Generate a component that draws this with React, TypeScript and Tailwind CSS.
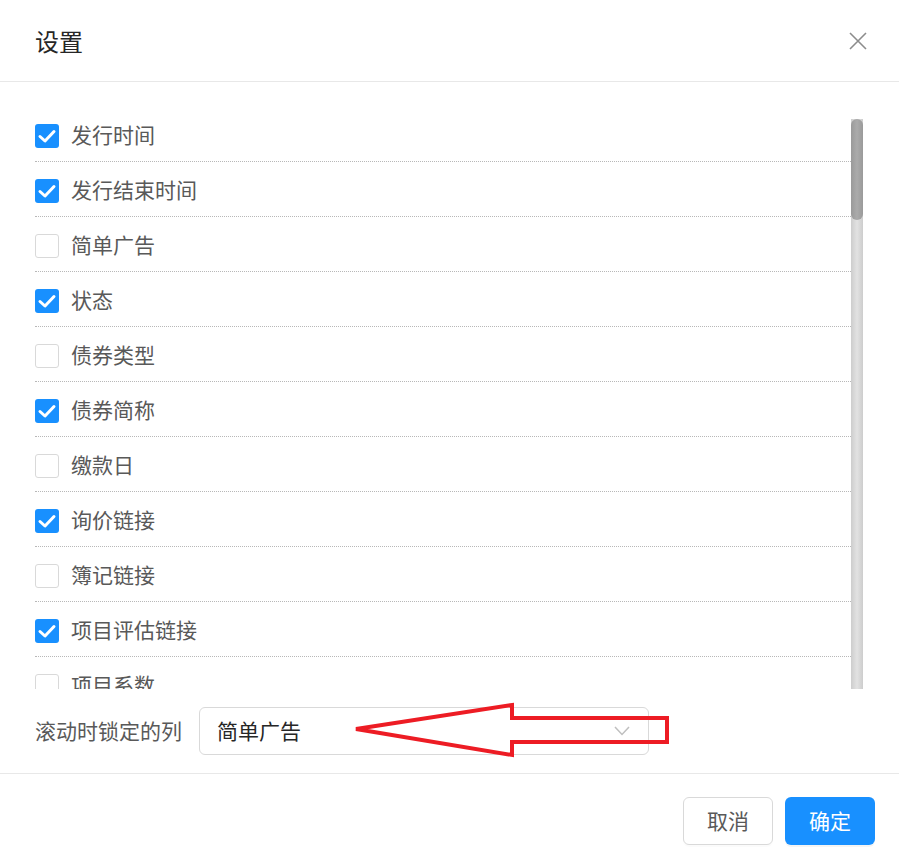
import React from "react";

const items: { label: string; checked: boolean }[] = [
  { label: "发行时间", checked: true },
  { label: "发行结束时间", checked: true },
  { label: "简单广告", checked: false },
  { label: "状态", checked: true },
  { label: "债券类型", checked: false },
  { label: "债券简称", checked: true },
  { label: "缴款日", checked: false },
  { label: "询价链接", checked: true },
  { label: "簿记链接", checked: false },
  { label: "项目评估链接", checked: true },
  { label: "项目系数", checked: false },
];

function Checkbox({ checked }: { checked: boolean }) {
  if (checked) {
    return (
      <span className="flex h-[24px] w-[24px] shrink-0 items-center justify-center rounded-[3px] bg-[#1890ff]">
        <svg width="24" height="24" viewBox="0 0 24 24" fill="none">
          <path d="M5 12.5 L10 17 L19 7.5" stroke="#ffffff" strokeWidth="3" strokeLinecap="round" strokeLinejoin="round" />
        </svg>
      </span>
    );
  }
  return <span className="block h-[24px] w-[24px] shrink-0 rounded-[3px] border border-[#d9d9d9] bg-white" />;
}

export default function App() {
  const font = { fontFamily: '"Microsoft YaHei", "Noto Sans CJK SC", "Noto Sans", sans-serif' };
  return (
    <div className="relative h-[865px] w-[899px] overflow-hidden bg-white" style={font}>
      {/* Header */}
      <div className="flex h-[82px] items-center justify-between border-b border-[#e8e8e8] pl-[35px] pr-[32px]">
        <div className="text-[24px] leading-[32px] text-[#262626]">设置</div>
        <svg width="18" height="18" viewBox="0 0 18 18" fill="none">
          <path d="M1 1 L17 17 M17 1 L1 17" stroke="#8c8c8c" strokeWidth="1.6" />
        </svg>
      </div>

      {/* Body */}
      <div className="pl-[35px] pr-[36px] pt-[25px]">
        <div className="flex h-[582px]">
          <div className="h-[582px] flex-1 overflow-hidden">
            {items.map((it) => (
              <div
                key={it.label}
                className="flex h-[55px] items-start border-b border-dotted border-[#b8b8b8] pt-[17px]"
              >
                <Checkbox checked={it.checked} />
                <span className="ml-[12px] -mt-[2px] text-[21px] leading-[24px] text-[#595959]">{it.label}</span>
              </div>
            ))}
          </div>
          <div className="mt-[12px] flex h-[570px] w-[12px] flex-col bg-gradient-to-r from-[#cdcdcd] via-[#e2e2e2] to-[#cdcdcd]">
            <div className="h-[101px] w-[12px] rounded-full bg-gradient-to-r from-[#9a9a9a] via-[#ababab] to-[#9a9a9a]" />
          </div>
        </div>

        <div className="flex h-[84px] items-center gap-[17px]">
          <span className="-mt-[2px] text-[21px] leading-[28px] text-[#595959]">滚动时锁定的列</span>
          <div className="flex h-[48px] w-[450px] items-center justify-between rounded-[6px] border border-[#d9d9d9] pl-[17px] pr-[18px]">
            <span className="-mt-[2px] text-[21px] leading-[28px] text-[#262626]">简单广告</span>
            <svg width="16" height="10" viewBox="0 0 16 10" fill="none">
              <path d="M1 1 L8 8.5 L15 1" stroke="#bfbfbf" strokeWidth="1.5" />
            </svg>
          </div>
        </div>
      </div>

      {/* Footer */}
      <div className="flex justify-end gap-[12px] border-t border-[#e8e8e8] pr-[24px] pt-[23px]">
        <button className="h-[48px] w-[90px] rounded-[6px] border border-[#d9d9d9] bg-white pb-[2px] text-[21px] leading-[28px] text-[#595959] shadow-[0_2px_0_rgba(0,0,0,0.015)]">
          取消
        </button>
        <button className="h-[48px] w-[90px] rounded-[6px] bg-[#1890ff] pb-[2px] text-[21px] leading-[28px] text-white shadow-[0_2px_0_rgba(0,0,0,0.045)]">
          确定
        </button>
      </div>

      {/* Red arrow annotation overlay */}
      <svg
        className="pointer-events-none absolute left-0 top-0"
        width="899"
        height="865"
        viewBox="0 0 899 865"
        fill="none"
      >
        <polygon
          points="356,729 512,705 512,718 667,718 667,742 512,742 512,755"
          stroke="#ed1c24"
          strokeWidth="4"
          strokeLinejoin="miter"
          fill="none"
        />
      </svg>
    </div>
  );
}
